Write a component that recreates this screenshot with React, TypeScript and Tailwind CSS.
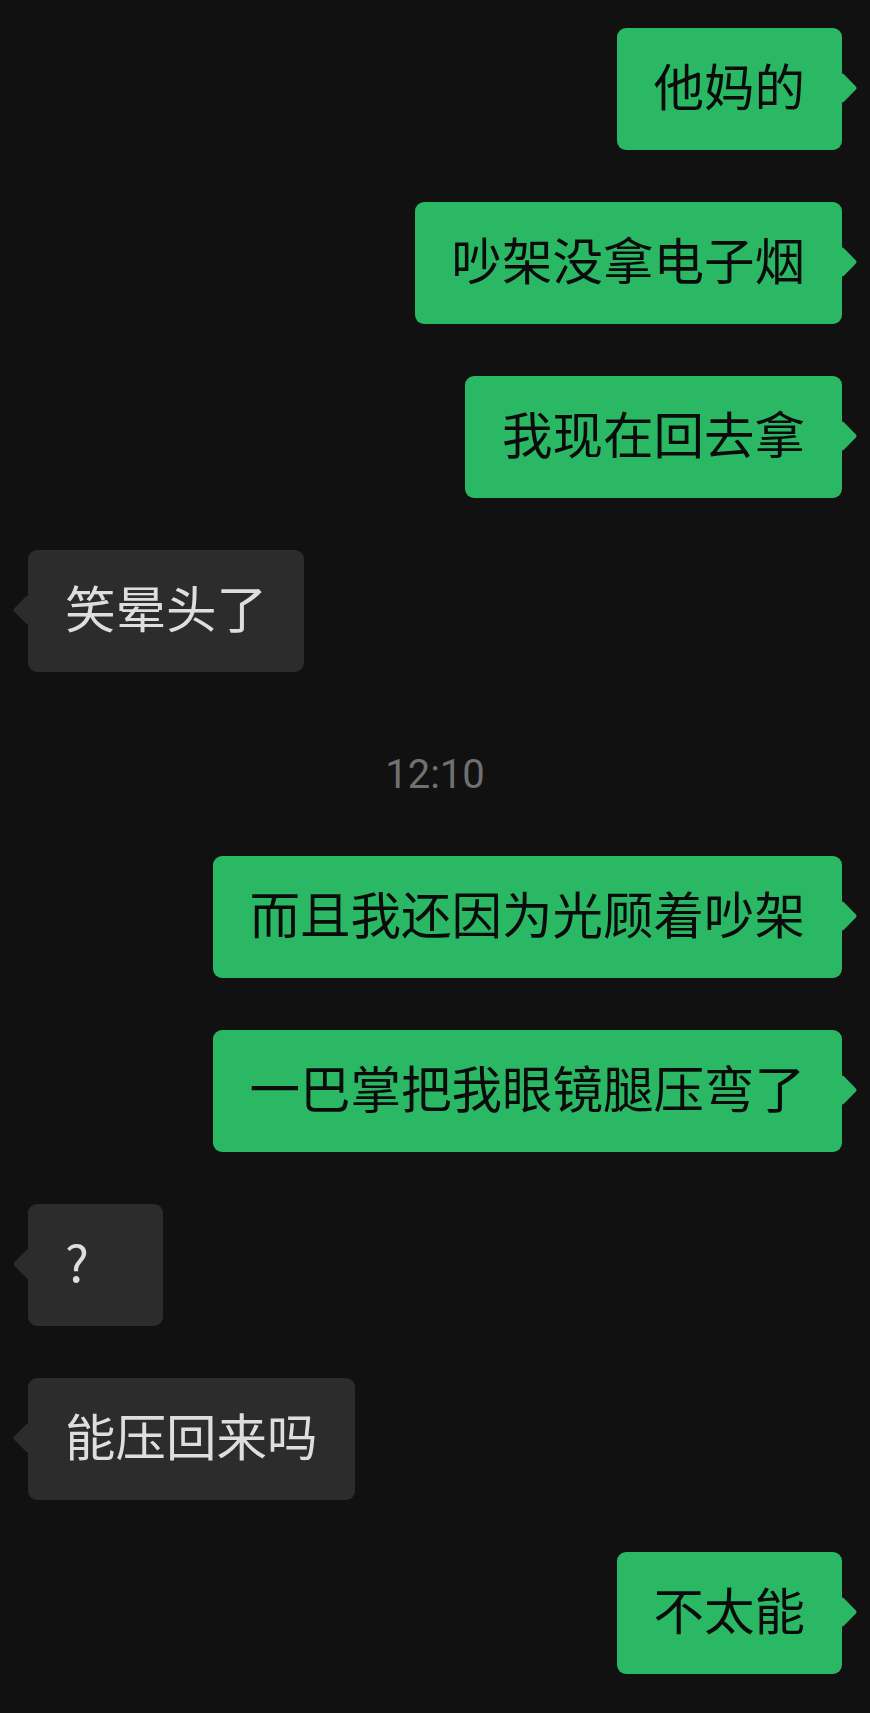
import React from "react";

type Msg =
  | { kind: "me"; text: string }
  | { kind: "them"; text: string }
  | { kind: "time"; text: string };

const messages: Msg[] = [
  { kind: "me", text: "他妈的" },
  { kind: "me", text: "吵架没拿电子烟" },
  { kind: "me", text: "我现在回去拿" },
  { kind: "them", text: "笑晕头了" },
  { kind: "time", text: "12:10" },
  { kind: "me", text: "而且我还因为光顾着吵架" },
  { kind: "me", text: "一巴掌把我眼镜腿压弯了" },
  { kind: "them", text: "?" },
  { kind: "them", text: "能压回来吗" },
  { kind: "me", text: "不太能" },
];

const font = {
  fontFamily: '"Noto Sans CJK SC", "Noto Sans", sans-serif',
};

const Bubble = ({ text, mine }: { text: string; mine: boolean }) => (
  <div className={`flex ${mine ? "justify-end" : "justify-start"}`}>
    <div
      className={`relative h-[122px] min-w-[135px] flex items-center px-[37px] pb-[10px] rounded-[9px] text-[50.5px] leading-none ${
        mine ? "bg-[#2bb864] text-[#0b0b0b]" : "bg-[#2c2c2c] text-[#dedede]"
      }`}
      style={font}
    >
      {/* tail */}
      <div
        className={`absolute top-[49px] w-[22px] h-[22px] rotate-45 rounded-[3px] ${
          mine ? "-right-[11px] bg-[#2bb864]" : "-left-[11px] bg-[#2c2c2c]"
        }`}
      />
      <span className="relative whitespace-nowrap">{text}</span>
    </div>
  </div>
);

export default function App() {
  return (
    <div className="min-h-[1713px] w-full bg-[#111111] px-[28px] pt-[28px] pb-[39px] flex flex-col gap-[52px] overflow-hidden">
      {messages.map((m, i) =>
        m.kind === "time" ? (
          <div
            key={i}
            className="mt-[31px] mb-[9px] h-[40px] text-center text-[40px] leading-[40px] text-[#707070]"
            style={{ fontFamily: 'Roboto, "Noto Sans", sans-serif' }}
          >
            {m.text}
          </div>
        ) : (
          <Bubble key={i} text={m.text} mine={m.kind === "me"} />
        )
      )}
    </div>
  );
}
